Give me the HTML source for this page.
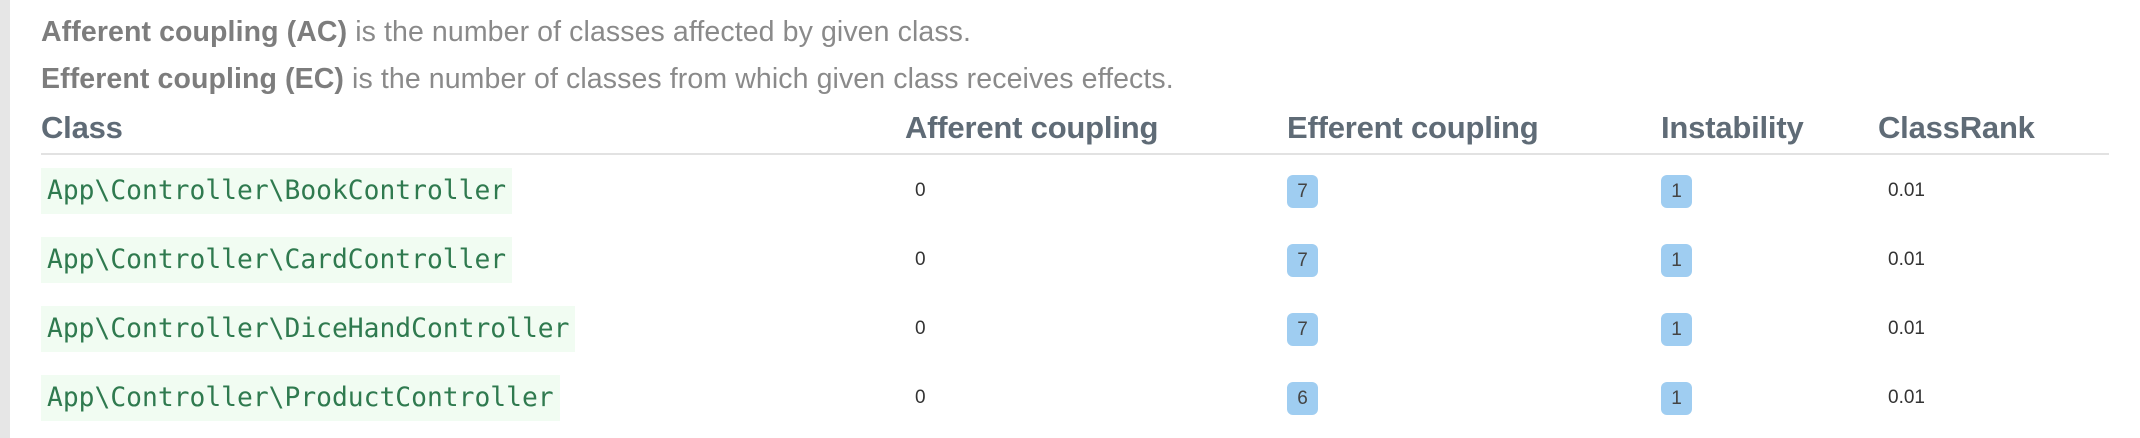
<!DOCTYPE html>
<html><head><meta charset="utf-8"><style>
body{margin:0;width:2140px;height:438px;background:#fff;position:relative;overflow:hidden;font-family:"Liberation Sans",sans-serif}
.bar{position:absolute;left:0;top:0;width:10px;height:438px;background:#e6e6e6}
.t{position:absolute;white-space:nowrap}
.d{left:41px;font-size:28.5px;color:#8a8a8a;letter-spacing:0.1px}
.d b{color:#7d7d7d}
.h{font-size:31px;font-weight:bold;color:#5f6b76;top:110px;letter-spacing:-0.2px}
.line{position:absolute;left:41px;width:2068px;top:153px;height:2px;background:#e2e2e2}
.code{position:absolute;left:41px;height:46px;line-height:46px;padding:0 6px;background:#f1fcf2;color:#2f7a4f;font-family:"DejaVu Sans Mono","Liberation Mono",monospace;font-size:26.3px}
.v{position:absolute;font-size:19px;color:#333;line-height:46px}
.b{position:absolute;width:31px;height:33px;background:#9fcdf1;border-radius:6px;font-size:19px;color:#444;text-align:center;line-height:33px}
</style></head><body>
<div class="bar"></div>
<div class="t d" style="top:16px"><b>Afferent coupling (AC)</b> is the number of classes affected by given class.</div>
<div class="t d" style="top:63px"><b>Efferent coupling (EC)</b> is the number of classes from which given class receives effects.</div>
<div class="t h" style="left:41px">Class</div>
<div class="t h" style="left:905px">Afferent coupling</div>
<div class="t h" style="left:1287px">Efferent coupling</div>
<div class="t h" style="left:1661px">Instability</div>
<div class="t h" style="left:1878px">ClassRank</div>
<div class="line"></div>

<div class="code" style="top:168px">App\Controller\BookController</div>
<div class="v" style="left:915px;top:168px">0</div>
<div class="b" style="left:1287px;top:175px">7</div>
<div class="b" style="left:1661px;top:175px">1</div>
<div class="v" style="left:1888px;top:168px">0.01</div>

<div class="code" style="top:237px">App\Controller\CardController</div>
<div class="v" style="left:915px;top:237px">0</div>
<div class="b" style="left:1287px;top:244px">7</div>
<div class="b" style="left:1661px;top:244px">1</div>
<div class="v" style="left:1888px;top:237px">0.01</div>

<div class="code" style="top:306px">App\Controller\DiceHandController</div>
<div class="v" style="left:915px;top:306px">0</div>
<div class="b" style="left:1287px;top:313px">7</div>
<div class="b" style="left:1661px;top:313px">1</div>
<div class="v" style="left:1888px;top:306px">0.01</div>

<div class="code" style="top:375px">App\Controller\ProductController</div>
<div class="v" style="left:915px;top:375px">0</div>
<div class="b" style="left:1287px;top:382px">6</div>
<div class="b" style="left:1661px;top:382px">1</div>
<div class="v" style="left:1888px;top:375px">0.01</div>
</body></html>
